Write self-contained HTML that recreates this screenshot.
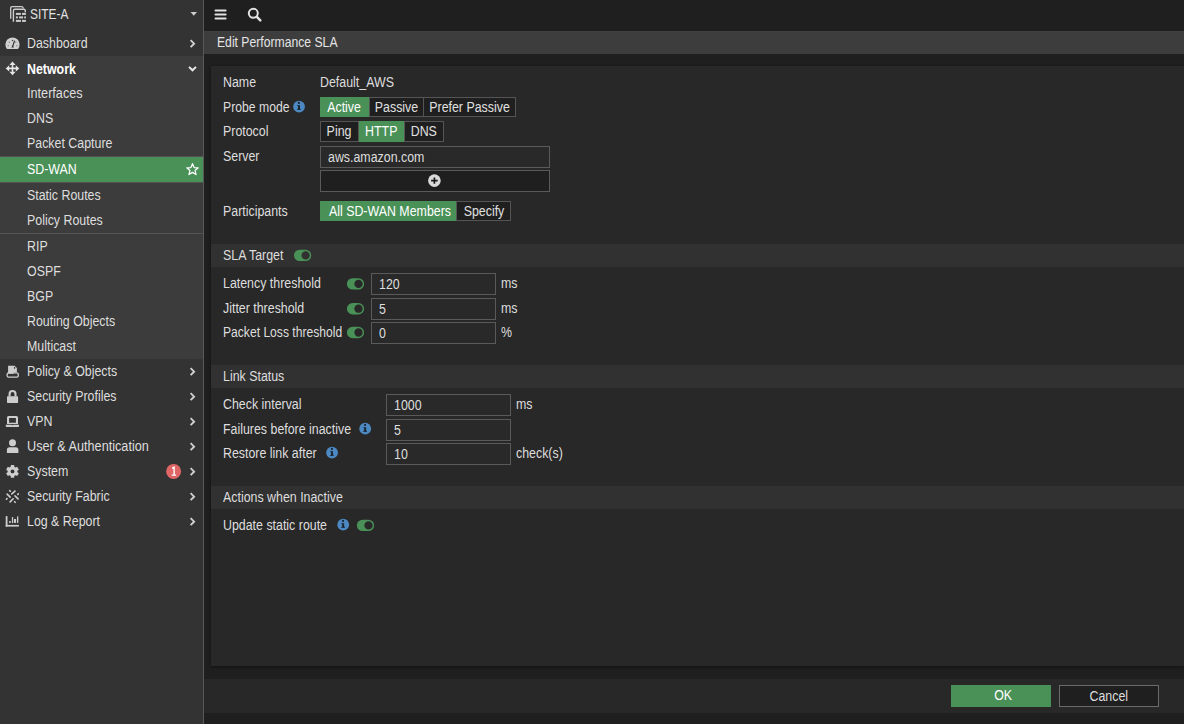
<!DOCTYPE html>
<html><head><meta charset="utf-8">
<style>
*{box-sizing:border-box;margin:0;padding:0}
html,body{width:1184px;height:724px;overflow:hidden;background:#1f1f1f;font-family:"Liberation Sans",sans-serif;font-size:14px;color:#dedede}
.a{position:absolute;height:16px;line-height:16px;white-space:nowrap;transform:scaleX(.885);transform-origin:0 0}
.t{display:inline-block;transform:scaleX(.885)}
.tl{display:inline-block;transform:scaleX(.885);transform-origin:0 0}
.b{position:absolute}
#side{left:0;top:0;width:203px;height:724px;background:#333333}
#sideb{left:203px;top:0;width:1px;height:724px;background:#595959}
#net{left:0;top:56px;width:203px;height:303px;background:#3c3c3c}
#sel{left:0;top:156px;width:203px;height:27px;background:#4a9158;border-top:1px solid #545054;border-bottom:1px solid #545054}
#sep{left:0;top:233px;width:203px;height:1px;background:#555}
#hdr{left:204px;top:31px;width:980px;height:23px;background:#3d3d3d;border-top:1px solid #3f3f3f}
#panel{left:211px;top:66px;width:973px;height:600px;background:#282828;box-shadow:0 1px 3px rgba(0,0,0,.45)}
#foot{left:204px;top:679px;width:980px;height:34px;background:#282828}
.si{left:27px}
.lbl{left:223px}
.sec{position:absolute;left:211px;width:973px;height:23px;background:#313131}
.seg{position:absolute;line-height:18px;border:1px solid #555;background:#1f1f1f;text-align:center;white-space:nowrap;color:#e0e0e0}
.on{background:#4a9158;border-color:#4a9158;color:#fff}
.inp{position:absolute;height:22px;border:1px solid #5a5a5a;background:#292929;line-height:20px;padding-left:7px;white-space:nowrap}
.btn{position:absolute;top:685px;height:22px;line-height:20px;text-align:center}
</style></head><body>
<div id="side" class="b"></div>
<div id="net" class="b"></div>
<div id="sel" class="b"></div>
<div id="sep" class="b"></div>
<div id="sideb" class="b"></div>

<div class="a si" style="left:30px;top:6px;color:#e2e2e2;transform:scaleX(0.85)">SITE-A</div>
<div class="a si" style="top:35px">Dashboard</div>
<div class="a si" style="top:61px;font-weight:bold;color:#fff;">Network</div>
<div class="a si" style="top:85px;transform:scaleX(0.905)">Interfaces</div>
<div class="a si" style="top:110px">DNS</div>
<div class="a si" style="top:135px">Packet Capture</div>
<div class="a si" style="top:161px;color:#fff">SD-WAN</div>
<div class="a si" style="top:187px">Static Routes</div>
<div class="a si" style="top:212px">Policy Routes</div>
<div class="a si" style="top:238px">RIP</div>
<div class="a si" style="top:263px">OSPF</div>
<div class="a si" style="top:288px">BGP</div>
<div class="a si" style="top:313px">Routing Objects</div>
<div class="a si" style="top:338px">Multicast</div>
<div class="a si" style="top:363px">Policy &amp; Objects</div>
<div class="a si" style="top:388px">Security Profiles</div>
<div class="a si" style="top:413px">VPN</div>
<div class="a si" style="top:438px;transform:scaleX(0.905)">User &amp; Authentication</div>
<div class="a si" style="top:463px">System</div>
<div class="a si" style="top:488px">Security Fabric</div>
<div class="a si" style="top:513px">Log &amp; Report</div>

<div id="hdr" class="b"></div>
<div class="a" style="left:217px;top:34px;color:#e4e4e4;transform:scaleX(0.87)">Edit Performance SLA</div>

<div id="panel" class="b"></div>
<div id="foot" class="b"></div>

<div class="a lbl" style="top:74px">Name</div>
<div class="a" style="left:320px;top:74px">Default_AWS</div>
<div class="a lbl" style="top:99px;transform:scaleX(0.872)">Probe mode</div>
<div class="seg on" style="left:320px;top:97px;width:49px;height:20px"><span class="t">Active</span></div>
<div class="seg" style="left:369px;top:97px;width:55px;height:20px"><span class="t">Passive</span></div>
<div class="seg" style="left:423px;top:97px;width:93px;height:20px"><span class="t">Prefer Passive</span></div>

<div class="a lbl" style="top:123px">Protocol</div>
<div class="seg" style="left:320px;top:121px;width:39px;height:21px;line-height:19px"><span class="t">Ping</span></div>
<div class="seg on" style="left:359px;top:121px;width:45px;height:21px;line-height:19px"><span class="t">HTTP</span></div>
<div class="seg" style="left:404px;top:121px;width:40px;height:21px;line-height:19px"><span class="t">DNS</span></div>

<div class="a lbl" style="top:148px">Server</div>
<div class="inp" style="left:320px;top:146px;width:230px"><span class="tl">aws.amazon.com</span></div>
<div class="inp" style="left:320px;top:170px;width:230px;background:#1f1f1f"></div>

<div class="a lbl" style="top:203px">Participants</div>
<div class="seg on" style="left:320px;top:201px;width:136px;height:20px"><span class="t">All SD-WAN Members</span></div>
<div class="seg" style="left:456px;top:201px;width:55px;height:20px"><span class="t">Specify</span></div>

<div class="sec" style="top:244px"></div>
<div class="a lbl" style="top:247px">SLA Target</div>

<div class="a lbl" style="top:275px">Latency threshold</div>
<div class="inp" style="left:371px;top:273px;width:125px"><span class="tl">120</span></div>
<div class="a" style="left:501px;top:275px">ms</div>

<div class="a lbl" style="top:300px">Jitter threshold</div>
<div class="inp" style="left:371px;top:298px;width:125px"><span class="tl">5</span></div>
<div class="a" style="left:501px;top:300px">ms</div>

<div class="a lbl" style="top:324px;transform:scaleX(0.865)">Packet Loss threshold</div>
<div class="inp" style="left:371px;top:322px;width:125px"><span class="tl">0</span></div>
<div class="a" style="left:501px;top:324px">%</div>

<div class="sec" style="top:365px"></div>
<div class="a lbl" style="top:368px">Link Status</div>

<div class="a lbl" style="top:396px">Check interval</div>
<div class="inp" style="left:386px;top:394px;width:125px"><span class="tl">1000</span></div>
<div class="a" style="left:516px;top:396px">ms</div>

<div class="a lbl" style="top:421px">Failures before inactive</div>
<div class="inp" style="left:386px;top:419px;width:125px"><span class="tl">5</span></div>

<div class="a lbl" style="top:445px">Restore link after</div>
<div class="inp" style="left:386px;top:443px;width:125px"><span class="tl">10</span></div>
<div class="a" style="left:516px;top:445px">check(s)</div>

<div class="sec" style="top:486px"></div>
<div class="a lbl" style="top:489px">Actions when Inactive</div>

<div class="a lbl" style="top:517px">Update static route</div>

<div class="btn" style="left:951px;width:100px;padding-left:4px;background:#4a9158;color:#fff"><span class="t">OK</span></div>
<div class="btn" style="left:1059px;width:100px;background:#1f1f1f;border:1px solid #6a6a6a"><span class="t">Cancel</span></div>

<!-- ICON OVERLAY -->
<svg class="b" style="left:0;top:0" width="1184" height="724" viewBox="0 0 1184 724">
<g fill="none" stroke="#cdcdcd" stroke-width="1.3">
 <path d="M10.7 18.8V8.2Q10.7 6.7 12.2 6.7H21.5Q23 6.7 23.4 8.3"/>
 <path d="M13.4 21.8V10.8Q13.4 9.3 14.9 9.3H23.8Q25.3 9.3 25.3 10.8V12.2" stroke-width="1.4"/>
</g>
<g fill="#cdcdcd">
 <rect x="15.9" y="12.9" width="5" height="2"/><rect x="22" y="12.9" width="3.9" height="2"/>
 <rect x="15.9" y="16.4" width="2" height="2"/><rect x="19.1" y="16.4" width="4" height="2"/><rect x="24.2" y="16.4" width="1.7" height="2"/>
 <rect x="15.9" y="19.9" width="5" height="2"/><rect x="22" y="19.9" width="3.9" height="2"/>
</g>
<path d="M190.5 12H197L193.75 15.8z" fill="#cdcdcd"/>

<!-- dashboard gauge -->
<path d="M7 49A7.1 7.1 0 1 1 18 49z" fill="#d0d0d0"/>
<path d="M12.6 46.6L14.6 40.6" stroke="#333" stroke-width="1.2"/>
<path d="M11.3 47.4L12.6 45.2L13.9 47.4z" fill="#333"/>
<circle cx="12.5" cy="40.6" r="0.75" fill="#444"/>
<circle cx="9.3" cy="42.3" r="0.7" fill="#888"/>
<circle cx="8.2" cy="45.7" r="0.7" fill="#888"/>
<circle cx="16.8" cy="45.7" r="0.7" fill="#888"/>
<circle cx="15.8" cy="42.3" r="0.7" fill="#888"/>

<!-- network arrows -->
<g fill="#e6e6e6">
 <path d="M12.5 61.4L15.6 64.9H9.4z M12.5 75.3L15.6 71.8H9.4z M5.7 68.4L9.2 65.3V71.5z M19.3 68.4L15.8 65.3V71.5z"/>
</g>
<path d="M12.5 64V73M8.5 68.4H16.5" stroke="#e6e6e6" stroke-width="1.6"/>

<!-- policy & objects -->
<rect x="7.1" y="372.9" width="11.2" height="4.3" rx="1.6" fill="none" stroke="#cdcdcd" stroke-width="1.3"/>
<path d="M8.1 365.8H14.6L16.9 368.1V372.3H13.6V373.8H8.1z" fill="#cdcdcd"/>
<circle cx="14.6" cy="367.9" r="0.8" fill="#333"/>

<!-- lock -->
<path d="M9.6 396.6V394A2.95 2.95 0 0 1 15.5 394V396.6" fill="none" stroke="#cdcdcd" stroke-width="2.1"/>
<rect x="7" y="396.3" width="11.1" height="6.6" rx="0.6" fill="#cdcdcd"/>

<!-- laptop -->
<path d="M8.5 416H16.5Q18 416 18 417.5V424H7V417.5Q7 416 8.5 416zM9.1 418.1V422.7H15.9V418.1z" fill="#cdcdcd" fill-rule="evenodd"/>
<path d="M5.8 424.7H19V426.2Q19 427 18.2 427H6.6Q5.8 427 5.8 426.2z" fill="#cdcdcd"/>
<path d="M11.3 424.6H13.7L12.5 425.6z" fill="#333"/>

<!-- user -->
<circle cx="12.5" cy="442.8" r="3.5" fill="#cdcdcd"/>
<path d="M6.9 452.9V449.7Q6.9 447.2 9.4 447.2H15.9Q18.4 447.2 18.4 449.7V452.9z" fill="#cdcdcd"/>

<!-- gear -->
<path d="M10.71 466.84 L10.84 465.01 L14.16 465.01 L14.29 466.84 L15.55 467.57 L17.20 466.76 L18.86 469.65 L17.35 470.67 L17.35 472.13 L18.86 473.15 L17.20 476.04 L15.55 475.23 L14.29 475.96 L14.16 477.79 L10.84 477.79 L10.71 475.96 L9.45 475.23 L7.80 476.04 L6.14 473.15 L7.65 472.13 L7.65 470.67 L6.14 469.65 L7.80 466.76 L9.45 467.57z" fill="#cdcdcd"/>
<circle cx="12.5" cy="471.4" r="1.9" fill="#333"/>

<!-- security fabric -->
<g stroke="#cdcdcd" stroke-width="1.6" stroke-linecap="round">
 <path d="M7.1 494.1L10.2 497.1M11.8 493.9L15 491.1M15 495.9L18.1 498.9M10.1 501.9L13.2 498.8"/>
 <path d="M9.7 490.6L10.3 491.2M17.8 494.4L18.4 493.8M6.4 499.2L7 498.6M14.6 501.7L15.2 502.3"/>
</g>

<!-- log & report -->
<g fill="#cdcdcd">
 <rect x="5.7" y="516.1" width="1.8" height="10.5"/>
 <rect x="5.7" y="524.9" width="13.2" height="1.7"/>
 <rect x="9.1" y="521.1" width="1.7" height="1.8"/>
 <rect x="11.9" y="517.1" width="1.3" height="6"/>
 <rect x="14" y="519" width="2.1" height="3.9"/>
 <rect x="17" y="516.4" width="1.3" height="6.5"/>
</g>

<!-- chevrons -->
<g fill="none" stroke="#d0d0d0" stroke-width="1.9">
 <path d="M190.6 40.2L194.1 43.7L190.6 47.2"/>
 <path d="M190.6 368.2L194.1 371.7L190.6 375.2"/>
 <path d="M190.6 393.2L194.1 396.7L190.6 400.2"/>
 <path d="M190.6 418.2L194.1 421.7L190.6 425.2"/>
 <path d="M190.6 443.2L194.1 446.7L190.6 450.2"/>
 <path d="M190.6 468.2L194.1 471.7L190.6 475.2"/>
 <path d="M190.6 493.2L194.1 496.7L190.6 500.2"/>
 <path d="M190.6 518.2L194.1 521.7L190.6 525.2"/>
</g>
<path d="M189 66.9L192.5 70.3L196 66.9" fill="none" stroke="#e8e8e8" stroke-width="2"/>

<!-- star -->
<path d="M192.50 163.70 L194.09 167.52 L198.21 167.85 L195.07 170.53 L196.03 174.55 L192.50 172.40 L188.97 174.55 L189.93 170.53 L186.79 167.85 L190.91 167.52z" fill="none" stroke="#fff" stroke-width="1.25" stroke-linejoin="round"/>

<!-- badge -->
<circle cx="173.6" cy="471.4" r="7.5" fill="#e06565"/>
<path d="M172.1 468.4L174.1 467.3V475.1M171.7 475.1H176.1" fill="none" stroke="#fff" stroke-width="1.4"/>

<!-- topbar -->
<path d="M215.5 10.4H225.6M215.5 14.5H225.6M215.5 18.6H225.6" stroke="#e2e2e2" stroke-width="2" stroke-linecap="round"/>
<circle cx="253.3" cy="13.3" r="4.5" fill="none" stroke="#e2e2e2" stroke-width="2"/>
<path d="M256.9 16.9L260.3 20.3" stroke="#e2e2e2" stroke-width="2.6" stroke-linecap="round"/>

<!-- info icons -->
<g>
<circle cx="299.05" cy="106.7" r="5.9" fill="#4c89c2"/>
<g fill="#1c2733">
<circle cx="298.9" cy="102.9" r="1.1"/>
<rect x="298" y="105.2" width="2" height="4.4"/>
<rect x="297.2" y="105.2" width="1" height="0.9"/>
<rect x="297.1" y="108.8" width="3.7" height="1"/>
</g>
</g>
<g transform="translate(66.15 322)">
<circle cx="299.05" cy="106.7" r="5.9" fill="#4c89c2"/>
<g fill="#1c2733">
<circle cx="298.9" cy="102.9" r="1.1"/>
<rect x="298" y="105.2" width="2" height="4.4"/>
<rect x="297.2" y="105.2" width="1" height="0.9"/>
<rect x="297.1" y="108.8" width="3.7" height="1"/>
</g>
</g>
<g transform="translate(33 346)">
<circle cx="299.05" cy="106.7" r="5.9" fill="#4c89c2"/>
<g fill="#1c2733">
<circle cx="298.9" cy="102.9" r="1.1"/>
<rect x="298" y="105.2" width="2" height="4.4"/>
<rect x="297.2" y="105.2" width="1" height="0.9"/>
<rect x="297.1" y="108.8" width="3.7" height="1"/>
</g>
</g>
<g transform="translate(44.15 418)">
<circle cx="299.05" cy="106.7" r="5.9" fill="#4c89c2"/>
<g fill="#1c2733">
<circle cx="298.9" cy="102.9" r="1.1"/>
<rect x="298" y="105.2" width="2" height="4.4"/>
<rect x="297.2" y="105.2" width="1" height="0.9"/>
<rect x="297.1" y="108.8" width="3.7" height="1"/>
</g>
</g>

<!-- plus -->
<circle cx="434.4" cy="180.6" r="6.3" fill="#dadada"/>
<path d="M434.4 177.4V183.8M431.1 180.6H437.7" stroke="#1a1a1a" stroke-width="1.7"/>

<!-- toggles -->
<path d="M299.7 249.7H305.5A5.7 5.7 0 0 1 305.5 261.09999999999997H299.7A5.7 5.7 0 0 1 299.7 249.7zM309.75 255.4A4.15 4.15 0 1 0 301.45000000000005 255.4A4.15 4.15 0 1 0 309.75 255.4z" fill="#4a9158" fill-rule="evenodd"/>
<path transform="translate(52.9 28.5)" d="M299.7 249.7H305.5A5.7 5.7 0 0 1 305.5 261.09999999999997H299.7A5.7 5.7 0 0 1 299.7 249.7zM309.75 255.4A4.15 4.15 0 1 0 301.45000000000005 255.4A4.15 4.15 0 1 0 309.75 255.4z" fill="#4a9158" fill-rule="evenodd"/>
<path transform="translate(52.9 53.3)" d="M299.7 249.7H305.5A5.7 5.7 0 0 1 305.5 261.09999999999997H299.7A5.7 5.7 0 0 1 299.7 249.7zM309.75 255.4A4.15 4.15 0 1 0 301.45000000000005 255.4A4.15 4.15 0 1 0 309.75 255.4z" fill="#4a9158" fill-rule="evenodd"/>
<path transform="translate(52.9 77.1)" d="M299.7 249.7H305.5A5.7 5.7 0 0 1 305.5 261.09999999999997H299.7A5.7 5.7 0 0 1 299.7 249.7zM309.75 255.4A4.15 4.15 0 1 0 301.45000000000005 255.4A4.15 4.15 0 1 0 309.75 255.4z" fill="#4a9158" fill-rule="evenodd"/>
<path transform="translate(62.9 270)" d="M299.7 249.7H305.5A5.7 5.7 0 0 1 305.5 261.09999999999997H299.7A5.7 5.7 0 0 1 299.7 249.7zM309.75 255.4A4.15 4.15 0 1 0 301.45000000000005 255.4A4.15 4.15 0 1 0 309.75 255.4z" fill="#4a9158" fill-rule="evenodd"/>
</svg>
</body></html>
